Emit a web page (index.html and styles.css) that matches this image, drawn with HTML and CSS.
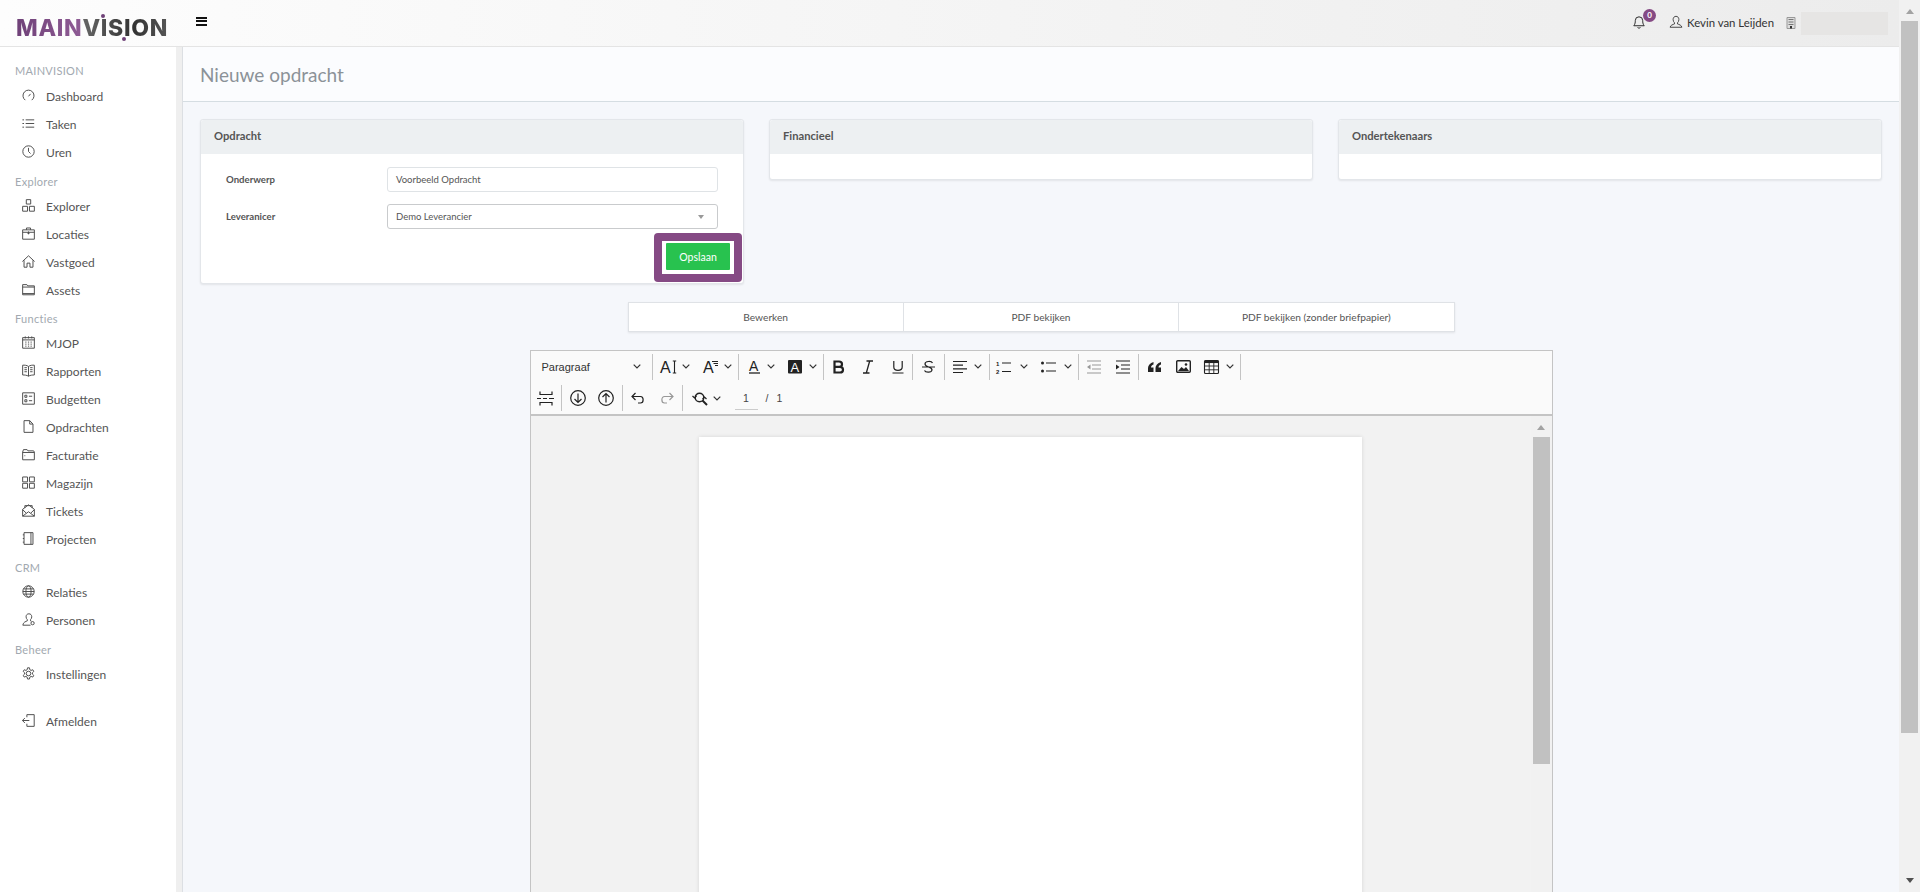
FILE: index.html
```html
<!DOCTYPE html>
<html lang="nl">
<head>
<meta charset="utf-8">
<title>Nieuwe opdracht</title>
<link rel="stylesheet" href="styles.css">
</head>
<body>
<svg width="0" height="0" class="defs">
  <symbol id="chev" viewBox="0 0 8 5"><path d="M.7.7L4 4 7.300.7" fill="none" stroke="#333" stroke-width="1.200"/></symbol>
</svg>
<div class="app">
  <div class="window">
    <header class="topbar">
      <div class="logo"><span class="logo-a">MAIN</span><span class="logo-b">VISION</span><i class="dot dot-up"></i><i class="dot dot-down"></i></div>
      <button class="burger" aria-label="menu"><span></span><span></span><span></span></button>
      <div class="top-right">
        <span class="bell">
          <svg viewBox="0 0 16 16" width="14" height="15"><path d="M8 1.500a4.200 4.200 0 0 0-4.200 4.200c0 4.500-1.800 6-1.800 6h12s-1.800-1.500-1.800-6A4.200 4.200 0 0 0 8 1.500zM6.500 13.500a1.600 1.600 0 0 0 3 0" fill="none" stroke="#222" stroke-width="1.100"/></svg>
          <span class="badge">0</span>
        </span>
        <svg class="user-ico" viewBox="0 0 16 16" width="14" height="14"><path d="M8 1.500c-2 0-3.300 1.500-3.300 3.700 0 1.600.7 3 1.600 3.700v1.300c-1.800.7-4.800 1.500-5 3.800h13.400c-.2-2.300-3.200-3.100-5-3.800V8.900c.9-.7 1.600-2.100 1.600-3.700C11.300 3 10 1.500 8 1.500z" fill="none" stroke="#333" stroke-width="1"/></svg>
        <span class="user">Kevin van Leijden</span>
        <svg class="bld-ico" viewBox="0 0 10 12" width="10" height="12"><path d="M1 .5h8v11H1z" fill="#ddd" stroke="#999"/><path d="M2.500 2.500h5M2.500 5h5M2.500 7.500h5" stroke="#777"/><path d="M4 9h2v2.500H4z" fill="#333"/></svg>
        <span class="redacted"></span>
      </div>
    </header>
    <div class="body">
      <nav class="sidebar">
        <div class="nav-title first">MAINVISION</div>
        <a class="nav-item"><svg class="ni" viewBox="0 0 16 16"><path d="M4 13.700a6.800 6.800 0 1 1 8 0M8 9l2.500-3" /></svg>Dashboard</a>
        <a class="nav-item"><svg class="ni" viewBox="0 0 16 16"><path d="M4.500 3.500H15M4.500 8H15M4.500 12.500H15M.5 3.500h2M.5 8h2M.5 12.500h2"/></svg>Taken</a>
        <a class="nav-item"><svg class="ni" viewBox="0 0 16 16"><circle cx="8" cy="8" r="7"/><path d="M8 3.500V8l2.500 2.500"/></svg>Uren</a>
        <div class="nav-title">Explorer</div>
        <a class="nav-item"><svg class="ni" viewBox="0 0 16 16"><path d="M5.300.8h5.400v5.400H5.300zM.8 9h6v6h-6zM9.200 9h6v6h-6z"/></svg>Explorer</a>
        <a class="nav-item"><svg class="ni" viewBox="0 0 16 16"><path d="M.8 3.500h14.400v11.500H.8zM5.500 3.500V1.200h5v2.300M.8 6.500h14.400M8 5.500v3.500M6.500 7.500h3"/></svg>Locaties</a>
        <a class="nav-item"><svg class="ni" viewBox="0 0 16 16"><path d="M.5 8L8 1l7.500 7M2.500 6.500V15h3.700v-5h3.600v5h3.700V6.500"/></svg>Vastgoed</a>
        <a class="nav-item"><svg class="ni" viewBox="0 0 16 16"><path d="M.8 2h5.200l1 1.500h8.200v11H.8zM.8 5h14.400M.8 13h14.400"/></svg>Assets</a>
        <div class="nav-title">Functies</div>
        <a class="nav-item"><svg class="ni" viewBox="0 0 16 16"><path d="M.8 2h14.400v13H.8zM4 .5v2.500M8 .5v2.500M12 .5v2.500M.8 4.800h14.400M4 7.500h1.500M7.300 7.500h1.500M10.500 7.500H12M4 10h1.500M7.300 10h1.500M10.500 10H12M4 12.500h1.500M7.300 12.500h1.500M10.500 12.500H12"/></svg>MJOP</a>
        <a class="nav-item"><svg class="ni" viewBox="0 0 16 16"><path d="M8 3C6 1.500 3 1.300.8 1.500v12c2.200 0 5.200.2 7.200 1.500 2-1.300 5-1.500 7.200-1.500v-12C13 1.300 10 1.500 8 3zM8 3v12M3 4.500h3M3 7h3M3 9.500h3M10 4.500h3M10 7h3M10 9.500h3"/></svg>Rapporten</a>
        <a class="nav-item"><svg class="ni" viewBox="0 0 16 16"><path d="M.8 1h14.400v14H.8zM3.500 4h2.500v2.500H3.500zM3.500 9.500h2.500V12H3.500zM8.500 5.200h4M8.500 10.700h4"/></svg>Budgetten</a>
        <a class="nav-item"><svg class="ni" viewBox="0 0 16 16"><path d="M2.500.8h7L13.500 5v10.200h-11zM9.500.8V5h4"/></svg>Opdrachten</a>
        <a class="nav-item"><svg class="ni" viewBox="0 0 16 16"><path d="M.8 5l1-3h4.500l1 1.500h7l.9 1.500v9.500H.8zM.8 5.500h14.400M3 9.500h1"/></svg>Facturatie</a>
        <a class="nav-item"><svg class="ni" viewBox="0 0 16 16"><path d="M.8 1.200h6v6h-6zM9.200 1.200h6v6h-6zM.8 9h6v6h-6zM9.200 9h6v6h-6z"/></svg>Magazijn</a>
        <a class="nav-item"><svg class="ni" viewBox="0 0 16 16"><path d="M.8 6.500L8 1l7.200 5.500V15H.8zM.8 15L8 9.500l7.200 5.500M.8 7L5 11M15.200 7L11 11M3.500 5V2h9v3"/></svg>Tickets</a>
        <a class="nav-item"><svg class="ni" viewBox="0 0 16 16"><path d="M2.500.8h11v14.400h-11zM11 .8v14.400M1 3.500h1.500M1 8h1.500M1 12.500h1.500"/></svg>Projecten</a>
        <div class="nav-title">CRM</div>
        <a class="nav-item"><svg class="ni" viewBox="0 0 16 16"><circle cx="8" cy="8" r="7"/><ellipse cx="8" cy="8" rx="3.200" ry="7"/><path d="M1 8h14M1.800 4.800h12.400M1.800 11.200h12.400"/></svg>Relaties</a>
        <a class="nav-item"><svg class="ni" viewBox="0 0 16 16"><path d="M8.500 1c-2.200 0-3.500 1.500-3.500 3.700 0 1.500.7 2.800 1.500 3.400v1.600C5 10.400 1.500 11 1 15h9.500M8.500 1C10.700 1 12 2.500 12 4.700c0 1.500-.7 2.800-1.500 3.400v1.600l1 .4"/><circle cx="13" cy="12.500" r="2"/></svg>Personen</a>
        <div class="nav-title">Beheer</div>
        <a class="nav-item"><svg class="ni" viewBox="0 0 16 16"><circle cx="8" cy="8" r="2.800"/><path d="M6.800 1h2.400l.4 2.300 1.600.9 2.100-.8 1.200 2.100-1.700 1.500v1.800l1.700 1.500-1.200 2.100-2.100-.8-1.600.9-.4 2.300H6.800l-.4-2.300-1.600-.9-2.100.8-1.200-2.100 1.700-1.500V7L1.500 5.500l1.200-2.100 2.100.8 1.600-.9z"/></svg>Instellingen</a>
        <a class="nav-item logout"><svg class="ni" viewBox="0 0 16 16"><path d="M6 4V.8h9v14.400H6V12M.5 8h8.500M3.500 5L.5 8l3 3"/></svg>Afmelden</a>
      </nav>
      <div class="gutter"></div>
      <main class="main">
        <div class="page-head"><h1>Nieuwe opdracht</h1></div>
        <div class="content">
          <div class="cards">
            <section class="card">
              <div class="card-head">Opdracht</div>
              <div class="card-body form">
                <div class="row">
                  <label>Onderwerp</label>
                  <div class="field">Voorbeeld Opdracht</div>
                </div>
                <div class="row">
                  <label>Leveranicer</label>
                  <div class="field select">Demo Leverancier<span class="caret"></span></div>
                </div>
                <div class="actions">
                  <div class="highlight"><div class="save-ring"><button class="save">Opslaan</button></div></div>
                </div>
              </div>
            </section>
            <section class="card card-empty">
              <div class="card-head">Financieel</div>
              <div class="card-body"></div>
            </section>
            <section class="card card-empty">
              <div class="card-head">Ondertekenaars</div>
              <div class="card-body"></div>
            </section>
          </div>
          <div class="tabs">
            <a class="tab">Bewerken</a>
            <a class="tab">PDF bekijken</a>
            <a class="tab">PDF bekijken (zonder briefpapier)</a>
          </div>
          <div class="editor">
            <div class="toolbar">
              <div class="tb-row">
                <span class="tb-select">Paragraaf<svg class="chev"><use href="#chev"/></svg></span>
                <i class="sep"></i>
                <span class="tb w43 g5"><svg class="ic" width="17" height="14" viewBox="0 0 17 14"><text x="0" y="13" class="ic-t">A</text><path d="M14.500 1v12M12.800 1h3.400M12.800 13h3.400" stroke-width="1.100"/></svg><svg class="chev"><use href="#chev"/></svg></span>
                <span class="tb w42 g6"><svg class="ic" width="15" height="14" viewBox="0 0 15 14"><text x="0" y="13" class="ic-t">A</text><path d="M9 1.500h6M10.500 3.500H15M12 5.500h3" stroke-width="1"/></svg><svg class="chev"><use href="#chev"/></svg></span>
                <i class="sep"></i>
                <span class="tb w43 g7"><svg class="ic" width="14" height="14" viewBox="0 0 14 14"><text x="3" y="11" class="ic-t s14">A</text><path d="M3 13h11" stroke-width="1.300"/></svg><svg class="chev"><use href="#chev"/></svg></span>
                <span class="tb w41 g7"><svg class="ic" width="14" height="14" viewBox="0 0 14 14"><rect width="14" height="13.500" rx="1" fill="#222" stroke="none"/><text x="2.500" y="11.500" class="ic-t s13 inv">A</text></svg><svg class="chev"><use href="#chev"/></svg></span>
                <i class="sep"></i>
                <span class="tb w29"><svg class="ic" width="13" height="14" viewBox="0 0 13 14"><path class="thick" d="M2.500 1.500h4.500c4 0 4 5.300 0 5.300H2.500zM2.500 6.800h5.500c4 0 4 5.700 0 5.700H2.500z"/></svg></span>
                <span class="tb w30"><svg class="ic" width="10" height="14" viewBox="0 0 10 14"><path d="M3.500 1H10M0 13h6.500M6.700 1L3.300 13" stroke-width="1.300"/></svg></span>
                <span class="tb w29"><svg class="ic" width="12" height="14" viewBox="0 0 12 14"><path d="M1.800 1v6c0 4.500 8.400 4.500 8.400 0V1M.5 13h11" stroke-width="1.200"/></svg></span>
                <i class="sep"></i>
                <span class="tb w31"><svg class="ic" width="13" height="14" viewBox="0 0 13 14"><path d="M10.500 3C9.500.8 3 .8 3 4c0 3.500 7.500 2.500 7 6-.4 2.700-6.500 2.700-7.500.5M0 7h13" stroke-width="1.200"/></svg></span>
                <i class="sep"></i>
                <span class="tb w44 g7"><svg class="ic" width="14" height="14" viewBox="0 0 14 14"><path d="M0 1.500h14M0 5.200h10M0 8.900h14M0 12.500h10" stroke-width="1.200"/></svg><svg class="chev"><use href="#chev"/></svg></span>
                <i class="sep"></i>
                <span class="tb w44 g9"><svg class="ic" width="15" height="14" viewBox="0 0 15 14"><path d="M6 3h9M6 11.500h9" stroke-width="1.200"/><text x="0" y="6" class="ic-n">1</text><text x="0" y="14" class="ic-n">2</text></svg><svg class="chev"><use href="#chev"/></svg></span>
                <span class="tb w44 g8"><svg class="ic" width="15" height="14" viewBox="0 0 15 14"><path d="M5 3h10M5 11h10" stroke-width="1.200"/><circle cx="1.500" cy="3" r="1.500" fill="#222" stroke="none"/><circle cx="1.500" cy="11" r="1.500" fill="#222" stroke="none"/></svg><svg class="chev"><use href="#chev"/></svg></span>
                <i class="sep"></i>
                <span class="tb w29 dim"><svg class="ic" width="14" height="14" viewBox="0 0 14 14"><path d="M0 1h14M5 5h9M5 9h9M0 13h14" stroke-width="1.200"/><path d="M3.500 4.500L0 7l3.500 2.500z" fill="#222" stroke="none"/></svg></span>
                <span class="tb w30"><svg class="ic" width="14" height="14" viewBox="0 0 14 14"><path d="M0 1h14M5 5h9M5 9h9M0 13h14" stroke-width="1.200"/><path d="M0 4.500L3.500 7 0 9.500z" fill="#222" stroke="none"/></svg></span>
                <i class="sep"></i>
                <span class="tb w31"><svg class="ic" width="13" height="12" viewBox="0 0 13 12"><path d="M5.500 1C2 2 0 4.500 0 7v4h5.500V6.500H3c0-1.500.8-2.500 2.500-3zM13 1C9.500 2 7.500 4.500 7.500 7v4H13V6.500h-2.500c0-1.500.8-2.500 2.500-3z" fill="#222" stroke="none"/></svg></span>
                <span class="tb w27"><svg class="ic" width="15" height="13" viewBox="0 0 15 13"><rect x=".7" y=".7" width="13.600" height="11.600" rx="1" stroke-width="1.400"/><path d="M2 11l3.500-4 2.500 2 2-2 3 4z" fill="#222" stroke="none"/><circle cx="10" cy="4.500" r="1.300" fill="#222" stroke="none"/></svg></span>
                <span class="tb w43 g7"><svg class="ic" width="15" height="14" viewBox="0 0 15 14"><rect x=".5" y=".5" width="14" height="13" rx="1"/><path d="M.5 1.800h14" stroke-width="2.500"/><path d="M.5 6h14M.5 9.800h14M5.200 2v12M9.800 2v12" stroke-width=".9"/></svg><svg class="chev"><use href="#chev"/></svg></span>
                <i class="sep"></i>
              </div>
              <div class="tb-row">
                <span class="tb w30"><svg class="ic" width="17" height="15" viewBox="0 0 17 15"><path d="M3 .5v3h12v-3M3 14.500v-3h12v3" stroke-width="1.200"/><path d="M0 7.500h4M6 7.500h4M12 7.500h5" stroke-width="1.200"/></svg></span>
                <i class="sep"></i>
                <span class="tb w33"><svg class="ic" width="16" height="16" viewBox="0 0 16 16"><circle cx="8" cy="8" r="7.300" stroke-width="1.200"/><path d="M8 3.500v9M4.500 9L8 12.500 11.500 9" stroke-width="1.200"/></svg></span>
                <span class="tb w27 left"><svg class="ic" width="16" height="16" viewBox="0 0 16 16"><circle cx="8" cy="8" r="7.300" stroke-width="1.200"/><path d="M8 12.500v-9M4.500 7L8 3.500 11.500 7" stroke-width="1.200"/></svg></span>
                <i class="sep"></i>
                <span class="tb w30"><svg class="ic" width="14" height="12" viewBox="0 0 14 12"><path d="M4.500 1L1 4.500 4.500 8M1 4.500h8.500c3.500 0 3.500 6.500 0 6.500H7" stroke-width="1.200"/></svg></span>
                <span class="tb w29 dim"><svg class="ic" width="14" height="12" viewBox="0 0 14 12"><path d="M9.500 1L13 4.500 9.500 8M13 4.500H4.500c-3.500 0-3.500 6.500 0 6.500H7" stroke-width="1.200"/></svg></span>
                <i class="sep"></i>
                <span class="tb find g5"><svg class="ic" width="16" height="15" viewBox="0 0 16 15"><circle cx="7.500" cy="6.500" r="4.300" stroke-width="1.400"/><path d="M10.500 9.500L15 14" stroke-width="2"/><path d="M.5 5l2 2 2-2M10.500 8l2-2 2 2" stroke-width="1.200"/></svg><svg class="chev"><use href="#chev"/></svg></span>
                <span class="page-no"><span class="cur">1</span><span>/</span><span>1</span></span>
              </div>
            </div>
            <div class="edit-area">
              <div class="sheet"></div>
              <div class="inner-scroll">
                <span class="arrow"></span>
                <span class="inner-thumb"></span>
              </div>
            </div>
          </div>
        </div>
      </main>
    </div>
  </div>
  <div class="page-scroll">
    <span class="arrow"></span>
    <span class="page-thumb"></span>
    <span class="arrow down"></span>
  </div>
</div>
</body>
</html>
```
FILE: styles.css
```css
* { box-sizing: border-box; }
html, body { margin: 0; height: 892px; overflow: hidden; }
body { font-family: Lato, "Noto Sans", sans-serif; font-size: 11px; color: #444; background: #f5f7fb; }
.defs { position: absolute; }
.app { display: flex; height: 892px; }
.window { flex: 1; min-width: 0; display: flex; flex-direction: column; }

.page-scroll { width: 21px; flex: none; background: #f1f1f1; display: flex; flex-direction: column; align-items: center; }
.page-scroll .arrow { margin: 9px 0 7px; }
.page-scroll .arrow.down { margin: auto 0 9px; }
.arrow { display: block; width: 0; height: 0; border-left: 4.500px solid transparent; border-right: 4.500px solid transparent; border-bottom: 5px solid #a3a3a3; }
.arrow.down { border-bottom: 0; border-top: 5px solid #505050; }
.page-thumb { width: 17px; height: 712px; background: #c1c1c1; }

.topbar { height: 47px; flex: none; display: flex; align-items: center; background: linear-gradient(90deg, #fdfdfd, #ececec); border-bottom: 1px solid #e4e4e4; }
.logo { position: relative; width: 196px; height: 46px; padding-left: 16px; font-family: Inter, "Liberation Sans", sans-serif; font-weight: 800; font-size: 23px; letter-spacing: .7px; white-space: nowrap; line-height: 57px; }
.logo-a { color: #80508a; background: linear-gradient(90deg, #6f4178, #8f5c95); -webkit-background-clip: text; background-clip: text; -webkit-text-fill-color: transparent; }
.logo-b { color: #444; background: linear-gradient(90deg, #666, #333 60%, #555); -webkit-background-clip: text; background-clip: text; -webkit-text-fill-color: transparent; }
.dot { position: absolute; width: 4px; height: 4px; border-radius: 50%; background: #6f4178; }
.dot-up { left: 101px; top: 14px; }
.dot-down { left: 122px; top: 37px; }
.burger { width: 11px; height: 9px; padding: 0; border: 0; background: none; display: flex; flex-direction: column; justify-content: space-between; margin-bottom: 4px; }
.burger span { display: block; height: 2px; background: #111; }
.top-right { margin-left: auto; display: flex; align-items: center; padding-right: 11px; }
.bell { position: relative; display: flex; margin-right: 23px; margin-top: -2px; }
.badge { position: absolute; left: 11px; top: -6px; width: 13px; height: 13px; border-radius: 50%; background: #854a84; color: #fff; font-size: 8px; font-weight: 700; line-height: 13px; text-align: center; }
.user-ico { margin-right: 4px; margin-top: -2px; }
.user { color: #333; font-size: 11.400px; margin-right: 12px; margin-top: -2px; }
.bld-ico { margin-right: 5px; }
.redacted { width: 87px; height: 23px; background: #e6e5e4; }

.body { flex: 1; min-height: 0; display: flex; }
.sidebar { width: 176px; flex: none; background: #fff; padding-top: 16px; display: flex; flex-direction: column; }
.gutter { width: 7px; flex: none; background: #efefef; border-right: 1px solid #dcdfe3; }
.nav-title { height: 15px; margin: 7px 0 3.800px 15px; color: #a2a9b0; font-size: 11px; line-height: 15px; letter-spacing: .3px; }
.nav-title.first { margin-top: 0; margin-bottom: 5px; }
.nav-item { display: flex; align-items: center; height: 27.900px; padding-left: 22px; color: #555; font-size: 12px; white-space: nowrap; }
.ni { width: 13px; height: 13px; margin-right: 11px; margin-top: -2px; fill: none; stroke: #4d4d4d; stroke-width: 1.200; flex: none; }
.logout { margin-top: 19px; }

.main { flex: 1; min-width: 0; }
.page-head { height: 55px; background: #fbfcfe; border-bottom: 1px solid #d5dde2; padding: 0 17px; display: flex; align-items: center; }
.page-head h1 { margin: 0; font-size: 19px; font-weight: 400; color: #8b9298; }
.content { padding: 17px 17px 0; }

.cards { display: grid; grid-template-columns: repeat(3, 544px); column-gap: 25px; align-items: start; }
.card { background: #fff; border: 1px solid #e3e6ea; border-radius: 3px; box-shadow: 0 1px 2px rgba(0,0,0,.08); }
.card-head { height: 34px; padding: 0 13px; background: #edf0f2; color: #555; font-size: 11.200px; font-weight: 700; line-height: 31px; border-radius: 3px 3px 0 0; }
.card-empty .card-body { height: 25px; }
.form { padding: 13px 25px 0; }
.row { display: flex; align-items: center; height: 25px; margin-bottom: 12px; }
.row label { width: 161px; flex: none; color: #555; font-size: 9.600px; font-weight: 700; }
.field { flex: 1; height: 25px; border: 1px solid #dfe3e6; border-radius: 3px; padding: 0 8px; font-size: 9.500px; line-height: 23px; color: #555; position: relative; }
.select { border-color: #c9cbcd; }
.caret { position: absolute; right: 13px; top: 10px; width: 0; height: 0; border-left: 3.500px solid transparent; border-right: 3.500px solid transparent; border-top: 4px solid #999; }
.actions { display: flex; justify-content: flex-end; margin: -8px -24px 0 0; padding-bottom: 1px; }
.highlight { background: #854a84; border-radius: 4px; padding: 8px; }
.save-ring { background: #fff; padding: 2px 4px 4px; }
.save { display: block; width: 64px; height: 27px; padding: 0; border: 0; background: #28c24f; color: #fff; font: 400 10.500px Lato, sans-serif; border-radius: 1px; }

.tabs { display: flex; width: 827px; height: 30px; margin: 18px auto 0; background: #fff; border: 1px solid #dfe2e6; box-shadow: 0 1px 2px rgba(0,0,0,.08); }
.tab { flex: 1; text-align: center; line-height: 28px; font-size: 10.200px; color: #555; border-left: 1px solid #dfe2e6; }
.tab:first-child { border-left: 0; }

.editor { width: 1023px; margin: 18px auto 0; border: 1px solid #c4c4c4; border-bottom: 0; }
.toolbar { height: 65px; background: #fafafa; border-bottom: 2px solid #c4c4c4; }
.tb-row { height: 31.500px; display: flex; align-items: center; }
.tb-select { width: 121.500px; flex: none; display: flex; align-items: center; justify-content: space-between; padding: 0 11px 0 11px; font: 11px "Liberation Sans", sans-serif; color: #333; }
.tb { display: flex; align-items: center; justify-content: center; flex: none; }
.w27 { width: 27px; } .w29 { width: 29px; } .w30 { width: 30px; } .w31 { width: 31px; } .w33 { width: 33px; }
.w41 { width: 41px; } .w42 { width: 42px; } .w43 { width: 43px; } .w44 { width: 44px; }
.g5 { gap: 5px; } .g6 { gap: 6px; } .g7 { gap: 7px; } .g8 { gap: 8px; } .g9 { gap: 9px; }
.left { justify-content: flex-start; padding-left: 3px; }
.find { width: 38px; justify-content: flex-start; padding-left: 9px; }
.tb.dim { opacity: .45; }
.sep { width: 1px; height: 26px; background: #c4c4c4; flex: none; }
.ic { fill: none; stroke: #222; stroke-width: 1.100; display: block; flex: none; overflow: visible; }
.ic-t { font: 400 16px "Liberation Sans", sans-serif; fill: #222; stroke: none; }
.s14 { font-size: 14px; }
.s13 { font-size: 13px; }
.inv { fill: #fff; }
.ic-n { font: 700 6px "Liberation Sans", sans-serif; fill: #222; stroke: none; }
.thick { stroke-width: 2.200; }
.chev { width: 8px; height: 5px; flex: none; }
.page-no { display: flex; align-items: center; gap: 8px; margin-left: 14px; font: 10.500px "Liberation Sans", sans-serif; color: #444; }
.cur { display: block; width: 23px; height: 24px; line-height: 24px; text-align: center; border-bottom: 1px solid #ccc; }

.edit-area { position: relative; height: 480px; background: #f2f2f2; display: flex; justify-content: center; padding-top: 21px; padding-right: 21px; }
.sheet { width: 663px; background: #fff; box-shadow: 0 0 4px rgba(0,0,0,.12); }
.inner-scroll { position: absolute; right: 0; top: 0; bottom: 0; width: 21px; background: #f1f1f1; display: flex; flex-direction: column; align-items: center; }
.inner-scroll .arrow { margin: 9px 0 7px; }
.inner-thumb { width: 17px; height: 327px; background: #c1c1c1; }
```
